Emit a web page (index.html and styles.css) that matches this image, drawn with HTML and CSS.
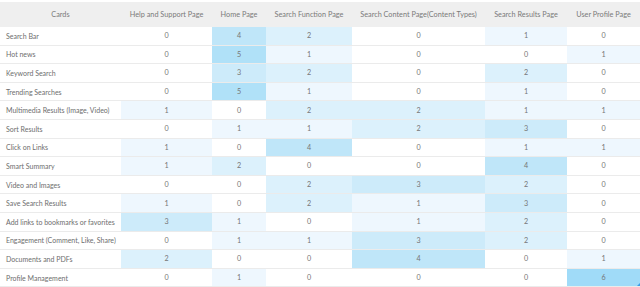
FILE: index.html
```html
<!DOCTYPE html>
<html>
<head>
<meta charset="utf-8">
<link rel="stylesheet" href="styles.css">
</head>
<body>
<div class="wrap">
<table class="heat">
<colgroup>
<col class="c1"><col class="c2"><col class="c3"><col class="c4"><col class="c5"><col class="c6"><col class="c7">
</colgroup>
<thead>
<tr><th>Cards</th><th>Help and Support Page</th><th>Home Page</th><th>Search Function Page</th><th>Search Content Page(Content Types)</th><th>Search Results Page</th><th>User Profile Page</th></tr>
</thead>
<tbody>
<tr><td class="name">Search Bar</td><td class="v0">0</td><td class="v4">4</td><td class="v2">2</td><td class="v0">0</td><td class="v1">1</td><td class="v0">0</td></tr>
<tr><td class="name">Hot news</td><td class="v0">0</td><td class="v5">5</td><td class="v1">1</td><td class="v0">0</td><td class="v0">0</td><td class="v1">1</td></tr>
<tr><td class="name">Keyword Search</td><td class="v0">0</td><td class="v3">3</td><td class="v2">2</td><td class="v0">0</td><td class="v2">2</td><td class="v0">0</td></tr>
<tr><td class="name">Trending Searches</td><td class="v0">0</td><td class="v5">5</td><td class="v1">1</td><td class="v0">0</td><td class="v1">1</td><td class="v0">0</td></tr>
<tr><td class="name">Multimedia Results (Image, Video)</td><td class="v1">1</td><td class="v0">0</td><td class="v2">2</td><td class="v2">2</td><td class="v1">1</td><td class="v1">1</td></tr>
<tr><td class="name">Sort Results</td><td class="v0">0</td><td class="v1">1</td><td class="v1">1</td><td class="v2">2</td><td class="v3">3</td><td class="v0">0</td></tr>
<tr><td class="name">Click on Links</td><td class="v1">1</td><td class="v0">0</td><td class="v4">4</td><td class="v0">0</td><td class="v1">1</td><td class="v1">1</td></tr>
<tr><td class="name">Smart Summary</td><td class="v1">1</td><td class="v2">2</td><td class="v0">0</td><td class="v0">0</td><td class="v4">4</td><td class="v0">0</td></tr>
<tr><td class="name">Video and Images</td><td class="v0">0</td><td class="v0">0</td><td class="v2">2</td><td class="v3">3</td><td class="v2">2</td><td class="v0">0</td></tr>
<tr><td class="name">Save Search Results</td><td class="v1">1</td><td class="v0">0</td><td class="v2">2</td><td class="v1">1</td><td class="v3">3</td><td class="v0">0</td></tr>
<tr><td class="name">Add links to bookmarks or favorites</td><td class="v3">3</td><td class="v1">1</td><td class="v0">0</td><td class="v1">1</td><td class="v2">2</td><td class="v0">0</td></tr>
<tr><td class="name">Engagement (Comment, Like, Share)</td><td class="v0">0</td><td class="v1">1</td><td class="v1">1</td><td class="v3">3</td><td class="v2">2</td><td class="v0">0</td></tr>
<tr><td class="name">Documents and PDFs</td><td class="v2">2</td><td class="v0">0</td><td class="v0">0</td><td class="v4">4</td><td class="v0">0</td><td class="v1">1</td></tr>
<tr><td class="name">Profile Management</td><td class="v0">0</td><td class="v1">1</td><td class="v0">0</td><td class="v0">0</td><td class="v0">0</td><td class="v6 corner">6</td></tr>
</tbody>
</table>
</div>
</body>
</html>
```
FILE: styles.css
```css
html, body {
  margin: 0;
  padding: 0;
  background: #ffffff;
}
.wrap {
  width: 640px;
  padding-top: 2px;
  font-family: "Lato", "Liberation Sans", sans-serif;
}
.heat {
  width: 640px;
  border-collapse: collapse;
  table-layout: fixed;
}
.c1 { width: 121px; }
.c2 { width: 91px; }
.c3 { width: 54px; }
.c4 { width: 86px; }
.c5 { width: 133px; }
.c6 { width: 82px; }
.c7 { width: 73px; }
.heat th {
  height: 25px;
  padding: 0;
  background: #efefef;
  color: #7a7a7a;
  font-weight: 400;
  font-size: 7.3px;
  text-align: center;
  white-space: nowrap;
}
.heat td {
  height: 17.6px;
  padding: 0;
  font-size: 7.2px;
  color: #767676;
  text-align: center;
  border-bottom: 1px solid #ebebeb;
  white-space: nowrap;
}
.heat td.name {
  text-align: left;
  padding-left: 6px;
  font-size: 7px;
  color: #6e6e6e;
}
.v0 { background: #ffffff; }
.v1 { background: #eef7fe; }
.v2 { background: #dcf1fc; }
.v3 { background: #cdebfa; }
.v4 { background: #bfe6f9; }
.v5 { background: #b0e1f8; }
.v6 { background: #a0dbf8; }
.corner {
  position: relative;
}
.corner::after {
  content: "";
  position: absolute;
  right: 0;
  bottom: 0;
  width: 0;
  height: 0;
  border-left: 3px solid transparent;
  border-bottom: 3px solid #3a9ee8;
}
```
